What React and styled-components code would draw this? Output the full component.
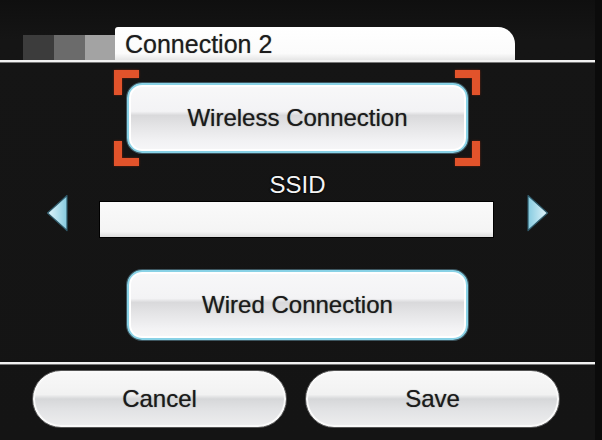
import React from "react";
import styled, { createGlobalStyle, css } from "styled-components";

const GlobalStyle = createGlobalStyle`
  html, body {
    margin: 0;
    padding: 0;
    background: #0b0b0b;
  }
  body {
    font-family: "Liberation Sans", Arial, sans-serif;
  }
`;

const Screen = styled.div`
  width: 595px;
  height: 440px;
  background: linear-gradient(to bottom, #0f0f0f 0px, #151515 40px, #141414 100%);
  display: flex;
  flex-direction: column;
  overflow: hidden;
`;

const Header = styled.div`
  height: 60px;
  display: flex;
  align-items: flex-end;
  padding-left: 23px;
`;

const Swatch = styled.div`
  width: ${({ w }) => w}px;
  height: 25px;
  background: ${({ tone }) => tone};
`;

const Tab = styled.div`
  width: 400px;
  height: 33px;
  box-sizing: border-box;
  background: linear-gradient(to bottom, #ffffff 0%, #fbfbfb 80%, #e6e6e6 100%);
  border-radius: 3px 17px 0 0;
  padding: 2px 0 0 10px;
  font-size: 25px;
  line-height: 30px;
  color: #1c1c1c;
  text-shadow: 0 0 1px #888;
`;

const Rule = styled.div`
  height: 2px;
  background: #f2f2f2;
  border-bottom: 1px solid #777;
`;

const Main = styled.div`
  flex: 1;
  display: flex;
  flex-direction: column;
  align-items: center;
  padding-top: 20px;
`;

const Focus = styled.div`
  position: relative;
`;

const Bracket = styled.div`
  position: absolute;
  width: 17px;
  height: 17px;
  border: 0 solid #e2532b;
  filter: drop-shadow(0 0 1px #6e200c);
  ${({ v }) => (v === "top" ? "top: -13px;" : "bottom: -13px;")}
  ${({ h }) => (h === "left" ? "left: -13px;" : "right: -12px;")}
  ${({ v }) => (v === "top" ? "border-top-width: 8px;" : "border-bottom-width: 8px;")}
  ${({ h }) => (h === "left" ? "border-left-width: 8px;" : "border-right-width: 8px;")}
`;

const glossText = css`
  font-size: 24px;
  color: #1a1a1a;
  text-shadow: 0 0 1px #666;
`;

const OptionButton = styled.div`
  width: 341px;
  height: 70px;
  box-sizing: border-box;
  border-radius: 15px;
  border: 2px solid #89d2e6;
  box-shadow: 0 0 0 1px #3d5660, inset 0 0 0 2px #ffffff;
  background: linear-gradient(
    to bottom,
    #f8f8f9 0%,
    #f3f3f5 40%,
    #d9d9db 46%,
    #e4e4e6 62%,
    #f2f2f4 85%,
    #f7f7f8 100%
  );
  display: flex;
  align-items: center;
  justify-content: center;
  ${glossText}
  margin-top: ${({ mt }) => mt || 0}px;
`;

const Label = styled.div`
  margin-top: 20px;
  font-size: 24px;
  line-height: 24px;
  color: #f4f4f4;
  text-shadow: 0 0 2px #000, 0 0 2px #000;
`;

const FieldRow = styled.div`
  display: flex;
  align-items: flex-start;
  margin-top: -3px;
`;

const Field = styled.div`
  width: 395px;
  height: 37px;
  margin: 7px 32px 0 30px;
  box-sizing: border-box;
  background: linear-gradient(to bottom, #fafafa 0%, #f4f4f4 85%, #dcdcdc 100%);
  border: 1px solid #000;
`;

const ArrowIcon = styled.svg`
  display: block;
  flex-shrink: 0;
`;

const Arrow = ({ dir }) => (
  <ArrowIcon width="23" height="38" viewBox="0 0 23 38">
    <defs>
      <linearGradient id={`ag-${dir}`} x1={dir === "left" ? "0" : "1"} y1="0" x2={dir === "left" ? "1" : "0"} y2="0">
        <stop offset="0" stopColor="#e2f5fb" />
        <stop offset="1" stopColor="#86cbe0" />
      </linearGradient>
    </defs>
    <polygon
      points={dir === "left" ? "21,1.5 1.5,19 21,36.5" : "2,1.5 21.5,19 2,36.5"}
      fill={`url(#ag-${dir})`}
      stroke="#2f5a6a"
      strokeWidth="1.2"
      strokeLinejoin="round"
    />
  </ArrowIcon>
);

const Footer = styled.div`
  display: flex;
  justify-content: center;
  gap: 18px;
  padding: 5px 3px 12px 0;
`;

const PillButton = styled.div`
  width: 255px;
  height: 58px;
  box-sizing: border-box;
  border-radius: 29px;
  border: 1px solid #555;
  box-shadow: inset 0 0 0 2px #fafafa;
  background: linear-gradient(
    to bottom,
    #f8f8f8 0%,
    #f2f2f2 42%,
    #d6d7d9 50%,
    #e1e2e4 68%,
    #eeeeef 100%
  );
  display: flex;
  align-items: center;
  justify-content: center;
  ${glossText}
`;

export default function App() {
  return (
    <>
      <GlobalStyle />
      <Screen>
        <Header>
          <Swatch w={31} tone="#3c3c3c" />
          <Swatch w={31} tone="#6b6b6b" />
          <Swatch w={30} tone="#a3a3a3" />
          <Tab>Connection 2</Tab>
        </Header>
        <Rule />
        <Main>
          <Focus>
            <Bracket v="top" h="left" />
            <Bracket v="top" h="right" />
            <Bracket v="bottom" h="left" />
            <Bracket v="bottom" h="right" />
            <OptionButton>Wireless Connection</OptionButton>
          </Focus>
          <Label>SSID</Label>
          <FieldRow>
            <Arrow dir="left" />
            <Field />
            <Arrow dir="right" />
          </FieldRow>
          <OptionButton mt={32}>Wired Connection</OptionButton>
        </Main>
        <Rule />
        <Footer>
          <PillButton>Cancel</PillButton>
          <PillButton>Save</PillButton>
        </Footer>
      </Screen>
    </>
  );
}
